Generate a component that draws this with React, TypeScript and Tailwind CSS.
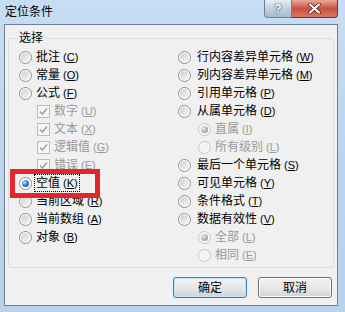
import React from 'react';

type Item = {
  kind: 'radio' | 'check';
  label: string;
  k: string;
  sub?: boolean;
  checked?: boolean;
  disabled?: boolean;
  focus?: boolean;
};

const left: Item[] = [
  { kind: 'radio', label: '批注', k: 'C' },
  { kind: 'radio', label: '常量', k: 'O' },
  { kind: 'radio', label: '公式', k: 'F' },
  { kind: 'check', label: '数字', k: 'U', sub: true, checked: true, disabled: true },
  { kind: 'check', label: '文本', k: 'X', sub: true, checked: true, disabled: true },
  { kind: 'check', label: '逻辑值', k: 'G', sub: true, checked: true, disabled: true },
  { kind: 'check', label: '错误', k: 'E', sub: true, checked: true, disabled: true },
  { kind: 'radio', label: '空值', k: 'K', checked: true, focus: true },
  { kind: 'radio', label: '当前区域', k: 'R' },
  { kind: 'radio', label: '当前数组', k: 'A' },
  { kind: 'radio', label: '对象', k: 'B' },
];

const right: Item[] = [
  { kind: 'radio', label: '行内容差异单元格', k: 'W' },
  { kind: 'radio', label: '列内容差异单元格', k: 'M' },
  { kind: 'radio', label: '引用单元格', k: 'P' },
  { kind: 'radio', label: '从属单元格', k: 'D' },
  { kind: 'radio', label: '直属', k: 'I', sub: true, checked: true, disabled: true },
  { kind: 'radio', label: '所有级别', k: 'L', sub: true, disabled: true },
  { kind: 'radio', label: '最后一个单元格', k: 'S' },
  { kind: 'radio', label: '可见单元格', k: 'Y' },
  { kind: 'radio', label: '条件格式', k: 'T' },
  { kind: 'radio', label: '数据有效性', k: 'V' },
  { kind: 'radio', label: '全部', k: 'L', sub: true, checked: true, disabled: true },
  { kind: 'radio', label: '相同', k: 'E', sub: true, disabled: true },
];

function Radio({ checked, disabled }: { checked?: boolean; disabled?: boolean }) {
  return (
    <span
      className={`flex items-center justify-center w-[13px] h-[13px] shrink-0 rounded-full border ${
        disabled ? 'border-[#c6c6c6] bg-[#f7f7f7]' : 'border-[#8d8d8d] bg-white'
      }`}
    >
      {checked ? (
        disabled ? (
          <span className="w-[7px] h-[7px] rounded-full bg-radial-[at_35%_35%] from-[#eeeeee] via-[#b4b4b4] to-[#8a8a8a]" />
        ) : (
          <span className="w-[7px] h-[7px] rounded-full bg-radial-[at_35%_35%] from-[#bfe3ff] via-[#2d78c4] to-[#123e74]" />
        )
      ) : (
        <span
          className={`w-[9px] h-[9px] rounded-full ${
            disabled ? 'bg-[#f4f4f4]' : 'bg-linear-to-br from-[#cfcfcf] to-[#f7f7f7]'
          }`}
        />
      )}
    </span>
  );
}

function Check() {
  return (
    <span className="flex items-center justify-center w-[13px] h-[13px] shrink-0 border border-[#bcbcbc] bg-[#f6f6f6]">
      <svg width="11" height="11" viewBox="0 0 11 11">
        <path d="M2 5.6 L4.4 8 L9 2.6" fill="none" stroke="#a3a3a3" strokeWidth="1.6" />
      </svg>
    </span>
  );
}

function Row({ it, col }: { it: Item; col: 'l' | 'r' }) {
  const pad = it.sub ? (col === 'l' ? 'pl-[18px]' : 'pl-[20px]') : 'pl-0';
  const gap = it.kind === 'check' ? 'gap-[3px]' : col === 'r' && !it.sub ? 'gap-[5px]' : 'gap-[3px]';
  const color = it.disabled ? 'text-[#999999]' : 'text-black';
  return (
    <div className={`h-[18px] flex items-center ${pad} ${gap}`}>
      {it.kind === 'radio' ? <Radio checked={it.checked} disabled={it.disabled} /> : <Check />}
      <span
        className={`whitespace-nowrap text-[12px] leading-[16px] ${color} ${
          it.focus ? 'outline outline-1 outline-dotted outline-black px-[1px]' : 'px-[1px]'
        }`}
      >
        {it.label}
        <span className="text-[11px] ml-[3px]">
          (<u>{it.k}</u>)
        </span>
      </span>
    </div>
  );
}

export default function App() {
  return (
    <div className="relative w-[345px] h-[312px] overflow-hidden flex flex-col bg-linear-to-b from-[#c7ddf4] via-[#bcd4ee] to-[#b9d2ec] font-['Liberation_Sans','Noto_Sans_CJK_SC',sans-serif]">
      {/* Title bar */}
      <div className="h-[24px] flex items-start shrink-0">
        <div className="self-center pl-[5px] text-[12px] leading-[16px] text-black">定位条件</div>
        <div className="ml-auto mr-[7px] flex h-[18px]">
          <div className="w-[28px] h-[18px] rounded-bl-[4px] border border-[#6e7f96] border-t-0 bg-linear-to-b from-[#e6edf6] via-[#c2cfdf] to-[#a9bbd2] flex items-center justify-center">
            <span className="text-[12px] leading-[12px] font-bold text-white [text-shadow:0_0_2px_#2f4a6b,0_0_1px_#2f4a6b]">?</span>
          </div>
          <div className="w-[46px] h-[18px] rounded-br-[4px] border border-[#7a2f27] border-t-0 border-l-0 bg-linear-to-b from-[#e9a899] via-[#c9503f] to-[#d77862] flex items-center justify-center">
            <svg width="13" height="11" viewBox="0 0 13 11">
              <path d="M2 1.5 L11 9.5 M11 1.5 L2 9.5" stroke="#4a1a14" strokeWidth="3.6" strokeLinecap="round" />
              <path d="M2 1.5 L11 9.5 M11 1.5 L2 9.5" stroke="#ffffff" strokeWidth="2.2" strokeLinecap="round" />
            </svg>
          </div>
        </div>
      </div>

      {/* Client area */}
      <div className="flex-1 ml-[4px] mr-[7px] mb-[6px] border border-[#6f8093] bg-[#f0f0f0] flex flex-col">
        <fieldset className="mt-[5px] mx-[3px] border border-[#d5dfe5] rounded-[3px] px-[9px] pb-[3px] min-w-0">
          <legend className="ml-[1px] pr-[3px] text-[12px] leading-[16px] text-black">选择</legend>
          <div className="flex pt-[2px]">
            <div className="w-[160px] flex flex-col pl-[1px]">
              {left.map((it, i) => (
                <Row key={i} it={it} col="l" />
              ))}
            </div>
            <div className="flex flex-col">
              {right.map((it, i) => (
                <Row key={i} it={it} col="r" />
              ))}
            </div>
          </div>
        </fieldset>

        <div className="flex justify-end gap-[11px] mt-[9px] mr-[5px]">
          <button className="w-[74px] h-[21px] rounded-[3px] border border-[#3d7bad] bg-linear-to-b from-[#f3f3f3] via-[#e6e6e6] to-[#d2d2d2] shadow-[inset_0_0_0_1px_#c6e6fa] text-[12px] leading-[16px] text-black">
            确定
          </button>
          <button className="w-[74px] h-[21px] rounded-[3px] border border-[#707070] bg-linear-to-b from-[#f3f3f3] via-[#e8e8e8] to-[#d4d4d4] shadow-[inset_0_0_0_1px_#fbfbfb] text-[12px] leading-[16px] text-black">
            取消
          </button>
        </div>
      </div>

      {/* Red highlight annotation */}
      <div className="absolute left-[10px] top-[169px] w-[90px] h-[29px] border-[5px] border-[#e3262c]" />
    </div>
  );
}
